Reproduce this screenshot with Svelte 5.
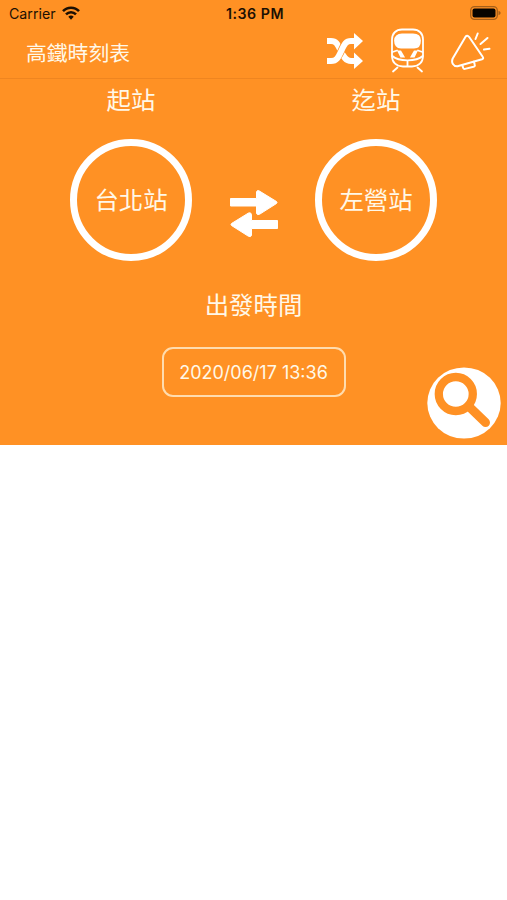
<script lang="ts">
  let from = $state("台北站");
  let to = $state("左營站");
  let departure = $state("2020/06/17 13:36");

  function swap() {
    [from, to] = [to, from];
  }
</script>

<div class="screen">
  <div class="status">
    <div class="carrier">
      <span>Carrier</span>
      <svg width="18" height="14" viewBox="0 0 18 14" fill="none" stroke="#1c1003" stroke-width="2.5">
        <path d="M1 5.2C5.3.5 12.7.5 17 5.2" />
        <path d="M4 8.4C6.8 5.4 11.2 5.4 14 8.4" />
        <path d="M6.3 10.8C7.8 9.2 10.2 9.2 11.7 10.8L9 13.7Z" fill="#1c1003" stroke="none" />
      </svg>
    </div>
    <span class="clock">1:36 PM</span>
    <svg class="battery" width="31" height="14" viewBox="0 0 31 14">
      <rect x=".7" y=".7" width="26.6" height="12.6" rx="3.8" fill="none" stroke="#a65f19" stroke-width="1.3" />
      <rect x="2.5" y="2.5" width="23" height="9" rx="2" fill="#080400" />
      <path d="M28.5 4.7Q30.7 5.5 30.7 7T28.5 9.3Z" fill="#a65f19" />
    </svg>
  </div>

  <header>
    <h1>高鐵時刻表</h1>
    <button type="button" class="shuffle" aria-label="Shuffle">
      <svg width="36" height="36" viewBox="0 0 36 36" fill="none">
        <path d="M0 8H4C9 8 10.5 11 13.5 17.5S19 28 24 28H29" stroke="#fff" stroke-width="6" />
        <path d="M7 27C10.5 25.5 12 23 14.5 17.5S18 9.5 21 8.5" stroke="#ff9124" stroke-width="7.6" />
        <path d="M0 28H4C10 28 11.5 24 14.5 17.5S19 8 24 8H29" stroke="#fff" stroke-width="6" />
        <path d="M27 0L36 8L27 16.5ZM27 19.5L36 28L27 36Z" fill="#fff" />
      </svg>
    </button>
    <button type="button" class="train" aria-label="Trains">
      <svg width="36" height="45" viewBox="0 0 36 45" fill="none" stroke="#fff" stroke-width="1.8" stroke-linecap="round">
        <path d="M12 1.5H23C29 1.5 33 5.5 33 11.5V28C33 34.5 28.5 38.5 22 38.5H13C6.5 38.5 2 34.5 2 28V11.5C2 5.5 6 1.5 12 1.5Z" />
        <path d="M12 6.5H23C27.5 6.5 30 9 30 12.5C30 17 28 19.7 24 19.7H11C7 19.7 5 17 5 12.5C5 9 7.5 6.5 12 6.5Z" fill="#fff" />
        <path d="M8.5 23.5H10.5L13.5 28.5H11ZM26.5 23.5H24.5L21.5 28.5H24Z" fill="#fff" />
        <path d="M2.5 24L7 22.5M32.5 24L28 22.5M2.3 28Q7 32.3 17.5 32.3T32.7 28M17.5 32.3V38M7.5 39.5L3 43.5M27.5 39.5L32 43.5" />
      </svg>
    </button>
    <button type="button" class="news" aria-label="News">
      <svg width="40" height="38" viewBox="0 0 40 38" fill="none" stroke="#fff" stroke-width="2" stroke-linecap="round" stroke-linejoin="round">
        <path d="M14.7 4.5L1.7 26.5C0 30.5 2.3 34.5 6.5 34.3L31 27.3Q33 26.5 31.5 24.5L18 4.8Q16.2 2.8 14.7 4.5Z" />
        <path d="M11.2 33.2L12.3 36.2Q12.7 37.2 14 36.9L22.5 34.8Q24.3 34.2 23.7 32.6L22.9 29.7" />
        <path d="M24.5 7L26.7 1.5M29.5 12L36.5 6M33 17.5L38.5 16.8" />
      </svg>
    </button>
  </header>

  <main>
    <div class="route">
      <div class="stop">
        <h2>起站</h2>
        <button type="button" class="station">{from}</button>
      </div>
      <button type="button" class="swap" aria-label="Swap stations" onclick={swap}>
        <svg width="48" height="48" viewBox="0 0 48 48" fill="#fff" stroke="#fff" stroke-linejoin="round">
          <path d="M.5 8.5H26.5V2Q27 0 29 .8L46.5 11.5Q47.5 12.5 46.5 13.5L29.5 24.3Q27 25.3 26.5 23.5V16H.5Z" />
          <path d="M47.5 30.5H21.5V24.5Q21 22 18.5 23L1.5 33.5Q.5 34.5 1.5 35.5L18.5 46.3Q21 47.3 21.5 45.5V38.5H47.5Z" />
        </svg>
      </button>
      <div class="stop">
        <h2>迄站</h2>
        <button type="button" class="station">{to}</button>
      </div>
    </div>

    <h2 class="when">出發時間</h2>
    <button type="button" class="date">{departure}</button>

    <button type="button" class="search" aria-label="Search">
      <svg width="74" height="72" viewBox="0 0 74 72">
        <ellipse cx="37" cy="36" rx="36.7" ry="35.6" fill="#fff" />
        <g fill="none" stroke="#ff9124">
          <circle cx="28.8" cy="27" r="17" stroke-width="8.3" />
          <path d="M44 41.5L58.5 55.5" stroke-width="9" stroke-linecap="round" />
        </g>
      </svg>
    </button>
  </main>
</div>

<style>
  :global(body) {
    margin: 0;
    background: #fff;
  }

  .screen {
    box-sizing: border-box;
    height: 445px;
    background: #ff9124;
    color: #fff8e8;
    font-family: Inter, "Noto Sans CJK TC", sans-serif;
  }

  button {
    display: block;
    padding: 0;
    border: 0;
    background: none;
    color: inherit;
    font: inherit;
    cursor: pointer;
  }

  svg {
    display: block;
  }

  .status {
    display: grid;
    grid-template-columns: 1fr auto 1fr;
    align-items: center;
    box-sizing: border-box;
    height: 27px;
    padding: 0 6px 0 9px;
    color: #1c1003;
    font-size: 14.2px;
  }

  .carrier {
    display: flex;
    align-items: center;
    gap: 6px;
  }

  .carrier svg {
    margin-top: -2px;
  }

  .clock {
    font-weight: 600;
    letter-spacing: 0.5px;
  }

  .battery {
    justify-self: end;
    margin-top: -1px;
  }

  header {
    display: flex;
    align-items: center;
    box-sizing: border-box;
    height: 52px;
    padding: 0 16px 4px 26px;
    border-bottom: 1px solid #ef8520;
  }

  h1,
  h2 {
    margin: 0;
    font-weight: 400;
  }

  h1 {
    flex: 1;
    padding-top: 7px;
    font-size: 20.8px;
    line-height: 30px;
  }

  .train {
    margin: 0 25px 0 27px;
  }

  .route {
    display: flex;
    justify-content: space-between;
    padding: 0 70px;
  }

  .stop {
    display: flex;
    flex-direction: column;
    align-items: center;
    gap: 18px;
  }

  h2 {
    font-size: 24.4px;
    line-height: 42px;
  }

  .station {
    box-sizing: border-box;
    width: 122px;
    height: 122px;
    padding-bottom: 3px;
    border: 7px solid #fff;
    border-radius: 50%;
    font-size: 24.4px;
  }

  .swap {
    align-self: flex-start;
    margin-top: 111px;
  }

  .when {
    margin-top: 23px;
    text-align: center;
  }

  .date {
    box-sizing: border-box;
    width: 184px;
    height: 50px;
    margin: 21px auto 0;
    border: 2px solid #ffdcae;
    border-radius: 11px;
    font-size: 18px;
  }

  .search {
    margin: -30px 6px 0 auto;
  }
</style>
